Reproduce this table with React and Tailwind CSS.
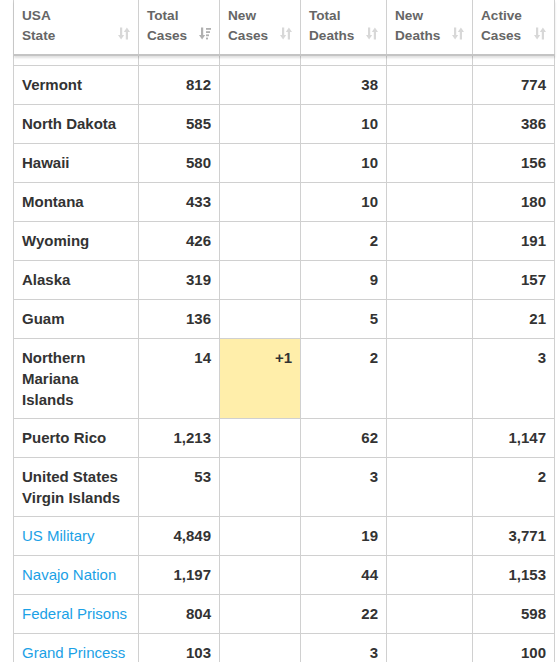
const COLS = 'grid grid-cols-[125px_81px_81px_86px_86px_82px]'

const HEADERS = [
  ['USA', 'State'],
  ['Total', 'Cases', true],
  ['New', 'Cases'],
  ['Total', 'Deaths'],
  ['New', 'Deaths'],
  ['Active', 'Cases'],
]

const ROWS = [
  { name: 'Vermont', total: '812', deaths: '38', active: '774' },
  { name: 'North Dakota', total: '585', deaths: '10', active: '386' },
  { name: 'Hawaii', total: '580', deaths: '10', active: '156' },
  { name: 'Montana', total: '433', deaths: '10', active: '180' },
  { name: 'Wyoming', total: '426', deaths: '2', active: '191' },
  { name: 'Alaska', total: '319', deaths: '9', active: '157' },
  { name: 'Guam', total: '136', deaths: '5', active: '21' },
  { name: 'Northern Mariana Islands', total: '14', newCases: '+1', deaths: '2', active: '3' },
  { name: 'Puerto Rico', total: '1,213', deaths: '62', active: '1,147' },
  { name: 'United States Virgin Islands', total: '53', deaths: '3', active: '2' },
  { name: 'US Military', link: true, total: '4,849', deaths: '19', active: '3,771' },
  { name: 'Navajo Nation', link: true, total: '1,197', deaths: '44', active: '1,153' },
  { name: 'Federal Prisons', link: true, total: '804', deaths: '22', active: '598' },
  { name: 'Grand Princess', link: true, total: '103', deaths: '3', active: '100' },
]

function SortIcon({ active }) {
  if (active) {
    return (
      <svg width="12" height="13" viewBox="0 0 12 13" className="text-[#b0b0b0]">
        <rect x="2" y="0.5" width="2.2" height="8" fill="currentColor" />
        <path d="M0 8 L6.2 8 L3.1 12.5 Z" fill="currentColor" />
        <rect x="7" y="1" width="5" height="1.8" fill="currentColor" />
        <rect x="7" y="4.2" width="4" height="1.8" fill="currentColor" />
        <rect x="7" y="7.4" width="3" height="1.8" fill="currentColor" />
        <rect x="7" y="10.6" width="2" height="1.8" fill="currentColor" />
      </svg>
    )
  }
  return (
    <svg width="12" height="13" viewBox="0 0 12 13" className="text-[#d8d8d8]">
      <rect x="2" y="0.5" width="2.2" height="8" fill="currentColor" />
      <path d="M0 8 L6.2 8 L3.1 12.5 Z" fill="currentColor" />
      <rect x="7.8" y="4.5" width="2.2" height="8" fill="currentColor" />
      <path d="M5.8 5 L12 5 L8.9 0.5 Z" fill="currentColor" />
    </svg>
  )
}

function Cell({ children, right, bg = '' }) {
  return (
    <div className={`min-h-[38px] border-r border-[#d0d0d0] px-2 py-2 leading-[21px] ${right ? 'text-right' : ''} ${bg}`}>
      {children}
    </div>
  )
}

export default function App() {
  return (
    <div className="h-[662px] overflow-hidden bg-white font-['Liberation_Sans',Arial,sans-serif] text-[15px] text-[#333]">
      <div className="ml-[13px] w-[542px] border-l border-[#d0d0d0]">
        <div className={`${COLS} relative h-[56px] border-b-2 border-[#c4c4c4] shadow-[0_2px_2px_rgba(0,0,0,0.12)]`}>
          {HEADERS.map(([a, b, active], i) => (
            <div key={i} className="flex items-end justify-between border-r border-[#d0d0d0] px-2 pt-[6px] pb-[8px] text-[13.6px] font-bold leading-[20px] text-[#666]">
              <div>
                <div>{a}</div>
                <div>{b}</div>
              </div>
              <div className="mb-[6px]">
                <SortIcon active={active} />
              </div>
            </div>
          ))}
        </div>
        <div className={`${COLS} h-[10px] border-b border-[#d0d0d0]`}>
          {HEADERS.map((_, i) => (
            <div key={i} className="border-r border-[#d0d0d0]" />
          ))}
        </div>
        {ROWS.map(r => (
          <div key={r.name} className={`${COLS} border-b border-[#d0d0d0]`}>
            <Cell>
              {r.link
                ? <span className="font-normal text-[#1ba1e6]">{r.name}</span>
                : <span className="font-bold">{r.name}</span>}
            </Cell>
            <Cell right><span className="font-bold">{r.total}</span></Cell>
            <Cell right bg={r.newCases ? 'bg-[#ffeeaa]' : ''}>
              <span className="font-bold">{r.newCases}</span>
            </Cell>
            <Cell right><span className="font-bold">{r.deaths}</span></Cell>
            <Cell right />
            <Cell right><span className="font-bold">{r.active}</span></Cell>
          </div>
        ))}
      </div>
    </div>
  )
}
